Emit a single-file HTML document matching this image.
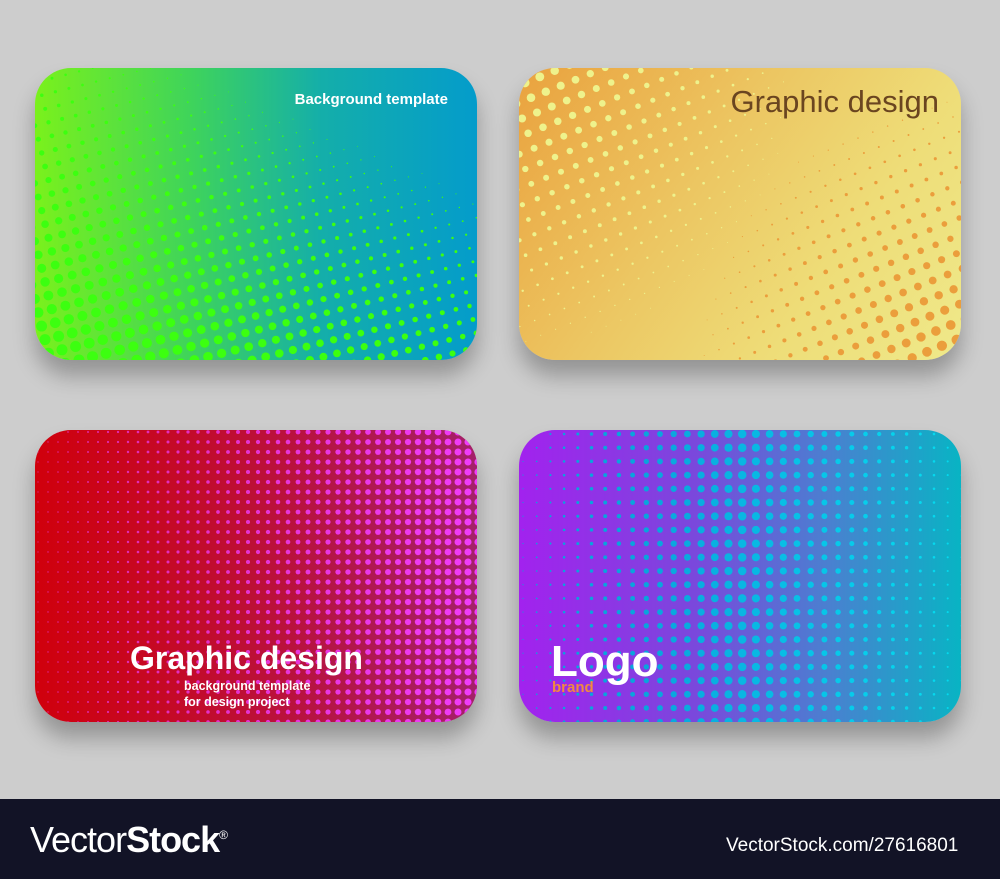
<!DOCTYPE html>
<html><head><meta charset="utf-8"><style>
body{margin:0;width:1000px;height:879px;background:#cdcdcd;position:relative;overflow:hidden;font-family:"Liberation Sans",sans-serif}
.c{position:absolute;width:442px;height:292px;border-radius:36px;overflow:hidden;box-shadow:0 16px 22px rgba(0,0,0,.28)}
.c svg{position:absolute;left:0;top:0}
.t{position:absolute;white-space:nowrap}
#c1{left:35px;top:68px;background:linear-gradient(90deg,#7af11c 0%,#3fd45a 35%,#14aeaa 65%,#049ccb 100%)}
#c2{left:519px;top:68px;background:linear-gradient(125deg,#eaa23e 0%,#ecc662 40%,#eedd78 70%,#efe98a 100%)}
#c3{left:35px;top:430px;background:linear-gradient(90deg,#d0000c 0%,#b81340 60%,#a4206a 100%)}
#c4{left:519px;top:430px;background:linear-gradient(90deg,#a222ee 0%,#7a48dc 40%,#4a80d0 70%,#08b4c4 100%)}
#foot{position:absolute;left:0;top:799px;width:1000px;height:80px;background:#121326;color:#fff}
</style></head><body>
<div class="c" id="c1"><svg id="s1" width="442" height="292"></svg>
<div class="t" style="right:29px;top:23px;color:#fff;font-weight:bold;font-size:15px">Background template</div></div>
<div class="c" id="c2"><svg id="s2" width="442" height="292"></svg>
<div class="t" style="right:22px;top:16px;color:#6a4520;font-size:31px">Graphic design</div></div>
<div class="c" id="c3"><svg id="s3" width="442" height="292"></svg>
<div class="t" style="left:95px;top:210px;color:#fff;font-weight:bold;font-size:32px">Graphic design</div>
<div class="t" style="left:149px;top:248px;color:#fff;font-weight:bold;font-size:12.5px;line-height:16px">background template<br>for design project</div></div>
<div class="c" id="c4"><svg id="s4" width="442" height="292"></svg>
<div class="t" style="left:32px;top:207px;color:#fff;font-weight:bold;font-size:44px">Logo</div>
<div class="t" style="left:33px;top:249px;color:#f08a40;font-weight:bold;font-size:15px">brand</div></div>
<div id="foot">
<div class="t" style="left:30px;top:20px;font-size:36px;letter-spacing:-1px">Vector<b>Stock</b><sup style="font-size:12px">®</sup></div>
<div class="t" style="left:726px;top:36px;font-size:19px">VectorStock.com/27616801</div>
</div>
<script>
var W=442,H=292;
function cl(v){return Math.max(0,Math.min(1,v))}
function gen(id,sp,ang,fn,ox,oy){
 var s=document.getElementById(id),o='',a=ang*Math.PI/180,ca=Math.cos(a),sa=Math.sin(a);
 ox=ox||0;oy=oy||0;
 for(var i=-60;i<90;i++)for(var j=-60;j<90;j++){
  var u=i*sp,v=j*sp,x=u*ca-v*sa+ox,y=u*sa+v*ca+oy;
  if(x<-10||x>W+10||y<-10||y>H+10)continue;
  var r=fn(x,y);if(!r||r[0]<0.4)continue;
  o+='<circle cx="'+x.toFixed(1)+'" cy="'+y.toFixed(1)+'" r="'+r[0].toFixed(2)+'" fill="'+r[1]+'"/>';
 }
 s.innerHTML=o;
}
gen('s1',14,-14,function(x,y){var f=cl(0.85*y/H+0.55*(1-x/W)-0.3);return [f*5.5,'#3cff10']});
gen('s2',16,-22,function(x,y){
 var d1=Math.hypot(x,y),d2=Math.hypot(W-x,H-y);
 var f1=cl(1-d1/300),f2=cl(1-d2/280);
 if(f1>f2)return [f1*4.8,'#eef28c'];return [f2*5.6,'#eb9e3c']});
gen('s3',10,0,function(x,y){var f=cl(x/W);return [0.6+f*3.0,'rgba(240,60,250,'+(0.6+0.4*f)+')']},3,2);
gen('s4',13.7,0,function(x,y){var f=x/W;var g=f<0.5?f/0.5:1-(f-0.5)/0.55;g=cl(g);
 var t=cl((f-0.3)/0.6);var G=Math.round(164+t*52),B=Math.round(220+t*18);
 return [0.5+g*3.8,'rgb('+Math.round(10-t*4)+','+G+','+B+')']},4,4);
</script>
</body></html>
